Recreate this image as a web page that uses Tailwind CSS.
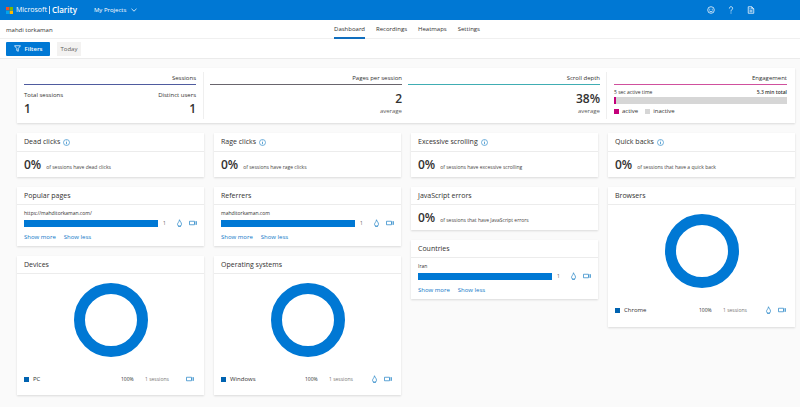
<!DOCTYPE html>
<html lang="en">
<head>
<meta charset="utf-8">
<meta name="viewport" content="width=device-width, initial-scale=1">
<title>Microsoft Clarity – Dashboard</title>
<script src="https://cdn.jsdelivr.net/npm/@tailwindcss/browser@4"></script>
</head>
<body class="min-h-screen bg-[#fafafa] font-['Open_Sans','Noto_Sans',sans-serif] text-[7px] leading-[10px] text-[#323130]">
<svg class="hidden" aria-hidden="true">
  <symbol id="info" viewBox="0 0 14 14"><circle cx="7" cy="7" r="6" fill="none" stroke="currentColor" stroke-width="1.3"/><path d="M7 6v4.5M7 3.3v1.4" stroke="currentColor" stroke-width="1.5"/></symbol>
  <symbol id="flame" viewBox="0 0 14 16"><path d="M7 1.500C7.500 4.500 11 6.500 11 10.500a4 4 0 0 1-8 0C3 8 6.500 6 7 1.500zM4 14.500h6" fill="none" stroke="currentColor" stroke-width="1.500"/></symbol>
  <symbol id="camera" viewBox="0 0 16 12"><path d="M1 2.500h10v7H1zM11 5l4-2v6l-4-2" fill="none" stroke="currentColor" stroke-width="1.500"/></symbol>
  <symbol id="donut" viewBox="0 0 74 74"><circle cx="37" cy="37" r="31.500" fill="none" stroke="#0078d4" stroke-width="11"/></symbol>
</svg>

<header class="flex h-5 items-center bg-[#0078d4] pl-[6px] pr-[45px] text-white">
  <a href="#" class="flex items-center">
    <svg class="size-[7px]" viewBox="0 0 7 7" aria-hidden="true"><path fill="#f25022" d="M0 0h3.300v3.300H0z"/><path fill="#7fba00" d="M3.700 0H7v3.300H3.700z"/><path fill="#00a4ef" d="M0 3.700h3.300V7H0z"/><path fill="#ffb900" d="M3.700 3.700H7V7H3.700z"/></svg>
    <span class="ml-[3px] text-[7px]">Microsoft</span>
    <span class="ml-[2px] h-2 w-px bg-white/80"></span>
    <span class="ml-[2px] text-[8px] font-semibold">Clarity</span>
  </a>
  <button type="button" class="ml-[17px] flex items-center gap-[5px] text-[6px] font-medium">My Projects
    <svg class="h-1 w-[6px]" viewBox="0 0 6 4" aria-hidden="true"><path d="M.5.8 3 3.200 5.500.8" fill="none" stroke="currentColor" stroke-width=".8"/></svg>
  </button>
  <div class="ml-auto flex items-center gap-[12px]">
    <button type="button" aria-label="Feedback"><svg class="size-2" viewBox="0 0 16 16"><circle cx="8" cy="8" r="6.600" fill="none" stroke="currentColor" stroke-width="1.500"/><path d="M5.500 5.500v2M10.500 5.500v2M4.500 9.500c1.500 2.500 5.500 2.500 7 0" fill="none" stroke="currentColor" stroke-width="1.500"/></svg></button>
    <button type="button" aria-label="Help"><svg class="size-2" viewBox="0 0 16 16"><path d="M4.800 5C4.800 0 11.500.5 11.200 4.800 11 7.500 8 7.500 8 11M8 13v2" fill="none" stroke="currentColor" stroke-width="1.600"/></svg></button>
    <button type="button" aria-label="Documentation"><svg class="size-2" viewBox="0 0 16 16"><path d="M2.500 1.500h7l4 4v9h-11zM9.500 1.500v4h4M5 8.500h6M5 11.500h6M5 5.500h2" fill="none" stroke="currentColor" stroke-width="1.500"/></svg></button>
  </div>
</header>

<div class="grid h-[19px] grid-cols-[1fr_auto_1fr] border-b border-[#f0f0f0] bg-white px-[6px] text-[6px]">
  <h1 class="self-center pt-px font-medium">mahdi torkaman</h1>
  <nav class="mr-[-7px] ml-[7px] flex gap-[11px] pt-[2px] leading-[15px]">
    <a href="#" aria-current="page" class="border-b-2 border-[#106ebe] font-medium">Dashboard</a>
    <a href="#">Recordings</a>
    <a href="#">Heatmaps</a>
    <a href="#">Settings</a>
  </nav>
</div>

<div class="flex h-5 items-center gap-[7px] border-b border-[#ebebeb] bg-white px-[6px] text-[6px]">
  <button type="button" class="flex h-[14px] w-11 items-center justify-center gap-1 rounded-[1px] bg-[#0078d4] font-semibold text-white">
    <svg class="size-[7px]" viewBox="0 0 14 14" aria-hidden="true"><path d="M1 1.500h12L8.500 7v5.500l-3-1.500V7z" fill="none" stroke="currentColor" stroke-width="1.500"/></svg>Filters</button>
  <button type="button" class="h-[14px] w-6 bg-[#f3f2f1] text-[6px] text-[#605e5c]">Today</button>
</div>

<main class="flex flex-col gap-[10px] pt-[9px] pr-[5px] pb-3 pl-[17px]">
  <section class="grid h-[55px] grid-cols-[187fr_201fr_202fr_188fr] bg-white py-1 shadow-[0_1px_2px_rgba(0,0,0,0.13)]" aria-label="Summary">
    <div class="border-r border-[#efefef] px-[7px]">
      <h2 class="h-[13px] border-b border-[#4f5b9f] text-right text-[6px] leading-[12px] font-medium">Sessions</h2>
      <div class="flex justify-between pt-[5px]">
        <div><p class="text-[6px] font-medium">Total sessions</p><p class="text-[12px] leading-[18px] font-semibold">1</p></div>
        <div class="text-right"><p class="text-[6px] font-medium">Distinct users</p><p class="text-[12px] leading-[18px] font-semibold">1</p></div>
      </div>
    </div>
    <div class="pr-[3px] pl-[6px] text-right">
      <h2 class="h-[13px] border-b border-[#69656d] text-[6px] leading-[12px] font-medium">Pages per session</h2>
      <p class="pt-[6px] text-[12px] leading-[16px] font-semibold">2</p>
      <p class="text-[6px] leading-[8px] text-[#605e5c]">average</p>
    </div>
    <div class="border-r border-[#efefef] pr-[6px] pl-[3px] text-right">
      <h2 class="h-[13px] border-b border-[#40adb3] text-[6px] leading-[12px] font-medium">Scroll depth</h2>
      <p class="pt-[6px] text-[12px] leading-[16px] font-semibold">38%</p>
      <p class="text-[6px] leading-[8px] text-[#605e5c]">average</p>
    </div>
    <div class="pr-2 pl-[7px]">
      <h2 class="h-[13px] border-b border-[#d0509d] text-right text-[6px] leading-[12px] font-medium">Engagement</h2>
      <div class="flex justify-between pt-[3px] text-[5px] leading-[9px]"><span>5 sec active time</span><span class="font-semibold">5.3 min total</span></div>
      <div class="flex h-[7px] gap-[2px] bg-[#d6d6d6]"><span class="w-[2px] bg-[#c4007a]"></span></div>
      <div class="flex items-center gap-[7px] pt-[2px] text-[6px] font-medium">
        <span class="flex items-center gap-[3px]"><i class="size-[5px] bg-[#c4007a]"></i>active</span>
        <span class="flex items-center gap-[3px]"><i class="size-[5px] bg-[#d6d6d6]"></i>inactive</span>
      </div>
    </div>
  </section>

  <div class="grid grid-cols-4 items-start gap-[10px]">
    <div class="flex flex-col gap-[10px]">
      <section class="bg-white shadow-[0_1px_2px_rgba(0,0,0,0.13)]">
        <h2 class="flex h-[19px] items-center gap-[3px] border-b border-[#ececec] px-[7px] font-medium">Dead clicks <svg class="size-[7px] text-[#2b88c8]" aria-hidden="true"><use href="#info"/></svg></h2>
        <p class="flex h-[25px] items-center gap-[5px] px-[7px]"><strong class="text-[12px] font-semibold">0%</strong><span class="pt-[5px] text-[5px] text-[#484644]">of sessions have dead clicks</span></p>
      </section>
      <section class="bg-white shadow-[0_1px_2px_rgba(0,0,0,0.13)]">
        <h2 class="flex h-[18px] items-center border-b border-[#ececec] px-[7px] font-medium">Popular pages</h2>
        <div class="px-[7px] pt-[3px] pb-1">
          <p class="text-[5px]">https://mahditorkaman.com/</p>
          <div class="flex items-center text-[#2b88c8]"><span class="h-[7px] flex-1 bg-[#0078d4]"></span><span class="w-[13px] text-center text-[5px] text-[#605e5c]">1</span><a href="#" aria-label="Heatmap" class="mr-[6px] ml-[5px]"><svg class="h-[8px] w-[7px]"><use href="#flame"/></svg></a><a href="#" aria-label="Recordings"><svg class="h-[6px] w-[8px]"><use href="#camera"/></svg></a></div>
          <div class="flex gap-2 pt-[4px] text-[6px] text-[#0f78c8]"><a href="#">Show more</a><a href="#">Show less</a></div>
        </div>
      </section>
      <section class="bg-white shadow-[0_1px_2px_rgba(0,0,0,0.13)]">
        <h2 class="flex h-[18px] items-center border-b border-[#ececec] px-[7px] font-medium">Devices</h2>
        <svg class="mx-auto mt-[9px] size-[74px]" role="img" aria-label="PC 100%"><use href="#donut"/></svg>
        <div class="mt-[17px] grid h-[21px] grid-cols-[1fr_24px_41px_11px] items-start px-[7px] text-[6px] text-[#2b88c8]">
          <span class="flex items-center gap-[4px] text-[#323130]"><i class="size-[5px] bg-[#0063b1]"></i>PC</span><span class="text-[5px] text-[#323130]">100%</span><span class="text-[5px] text-[#797775]">1 sessions</span><a href="#" aria-label="Recordings" class="flex h-[10px] items-center"><svg class="h-[6px] w-[8px]"><use href="#camera"/></svg></a>
        </div>
      </section>
    </div>

    <div class="flex flex-col gap-[10px]">
      <section class="bg-white shadow-[0_1px_2px_rgba(0,0,0,0.13)]">
        <h2 class="flex h-[19px] items-center gap-[3px] border-b border-[#ececec] px-[7px] font-medium">Rage clicks <svg class="size-[7px] text-[#2b88c8]" aria-hidden="true"><use href="#info"/></svg></h2>
        <p class="flex h-[25px] items-center gap-[5px] px-[7px]"><strong class="text-[12px] font-semibold">0%</strong><span class="pt-[5px] text-[5px] text-[#484644]">of sessions have rage clicks</span></p>
      </section>
      <section class="bg-white shadow-[0_1px_2px_rgba(0,0,0,0.13)]">
        <h2 class="flex h-[18px] items-center border-b border-[#ececec] px-[7px] font-medium">Referrers</h2>
        <div class="px-[7px] pt-[3px] pb-1">
          <p class="text-[5px]">mahditorkaman.com</p>
          <div class="flex items-center text-[#2b88c8]"><span class="h-[7px] flex-1 bg-[#0078d4]"></span><span class="w-[13px] text-center text-[5px] text-[#605e5c]">1</span><a href="#" aria-label="Heatmap" class="mr-[6px] ml-[5px]"><svg class="h-[8px] w-[7px]"><use href="#flame"/></svg></a><a href="#" aria-label="Recordings"><svg class="h-[6px] w-[8px]"><use href="#camera"/></svg></a></div>
          <div class="flex gap-2 pt-[4px] text-[6px] text-[#0f78c8]"><a href="#">Show more</a><a href="#">Show less</a></div>
        </div>
      </section>
      <section class="bg-white shadow-[0_1px_2px_rgba(0,0,0,0.13)]">
        <h2 class="flex h-[18px] items-center border-b border-[#ececec] px-[7px] font-medium">Operating systems</h2>
        <svg class="mx-auto mt-[9px] size-[74px]" role="img" aria-label="Windows 100%"><use href="#donut"/></svg>
        <div class="mt-[17px] grid h-[21px] grid-cols-[1fr_24px_42px_13px_10px] items-start px-[7px] text-[6px] text-[#2b88c8]">
          <span class="flex items-center gap-[4px] text-[#323130]"><i class="size-[5px] bg-[#0063b1]"></i>Windows</span><span class="text-[5px] text-[#323130]">100%</span><span class="text-[5px] text-[#797775]">1 sessions</span><a href="#" aria-label="Heatmap" class="flex h-[10px] items-center"><svg class="h-[8px] w-[7px]"><use href="#flame"/></svg></a><a href="#" aria-label="Recordings" class="flex h-[10px] items-center"><svg class="h-[6px] w-[8px]"><use href="#camera"/></svg></a>
        </div>
      </section>
    </div>

    <div class="flex flex-col gap-[10px]">
      <section class="bg-white shadow-[0_1px_2px_rgba(0,0,0,0.13)]">
        <h2 class="flex h-[19px] items-center gap-[3px] border-b border-[#ececec] px-[7px] font-medium">Excessive scrolling <svg class="size-[7px] text-[#2b88c8]" aria-hidden="true"><use href="#info"/></svg></h2>
        <p class="flex h-[25px] items-center gap-[5px] px-[7px]"><strong class="text-[12px] font-semibold">0%</strong><span class="pt-[5px] text-[5px] text-[#484644]">of sessions have excessive scrolling</span></p>
      </section>
      <section class="bg-white shadow-[0_1px_2px_rgba(0,0,0,0.13)]">
        <h2 class="flex h-[18px] items-center border-b border-[#ececec] px-[7px] font-medium">JavaScript errors</h2>
        <p class="flex h-[25px] items-center gap-[5px] px-[7px]"><strong class="text-[12px] font-semibold">0%</strong><span class="pt-[5px] text-[5px] text-[#484644]">of sessions that have JavaScript errors</span></p>
      </section>
      <section class="bg-white shadow-[0_1px_2px_rgba(0,0,0,0.13)]">
        <h2 class="flex h-[18px] items-center border-b border-[#ececec] px-[7px] font-medium">Countries</h2>
        <div class="px-[7px] pt-[3px] pb-1">
          <p class="text-[5px]">Iran</p>
          <div class="flex items-center text-[#2b88c8]"><span class="h-[7px] flex-1 bg-[#0078d4]"></span><span class="w-[13px] text-center text-[5px] text-[#605e5c]">1</span><a href="#" aria-label="Heatmap" class="mr-[6px] ml-[5px]"><svg class="h-[8px] w-[7px]"><use href="#flame"/></svg></a><a href="#" aria-label="Recordings"><svg class="h-[6px] w-[8px]"><use href="#camera"/></svg></a></div>
          <div class="flex gap-2 pt-[4px] text-[6px] text-[#0f78c8]"><a href="#">Show more</a><a href="#">Show less</a></div>
        </div>
      </section>
    </div>

    <div class="flex flex-col gap-[10px]">
      <section class="bg-white shadow-[0_1px_2px_rgba(0,0,0,0.13)]">
        <h2 class="flex h-[19px] items-center gap-[3px] border-b border-[#ececec] px-[7px] font-medium">Quick backs <svg class="size-[7px] text-[#2b88c8]" aria-hidden="true"><use href="#info"/></svg></h2>
        <p class="flex h-[25px] items-center gap-[5px] px-[7px]"><strong class="text-[12px] font-semibold">0%</strong><span class="pt-[5px] text-[5px] text-[#484644]">of sessions that have a quick back</span></p>
      </section>
      <section class="bg-white shadow-[0_1px_2px_rgba(0,0,0,0.13)]">
        <h2 class="flex h-[18px] items-center border-b border-[#ececec] px-[7px] font-medium">Browsers</h2>
        <svg class="mx-auto mt-[9px] size-[74px]" role="img" aria-label="Chrome 100%"><use href="#donut"/></svg>
        <div class="mt-[17px] grid h-[22px] grid-cols-[1fr_24px_42px_13px_10px] items-start px-[7px] text-[6px] text-[#2b88c8]">
          <span class="flex items-center gap-[4px] text-[#323130]"><i class="size-[5px] bg-[#0063b1]"></i>Chrome</span><span class="text-[5px] text-[#323130]">100%</span><span class="text-[5px] text-[#797775]">1 sessions</span><a href="#" aria-label="Heatmap" class="flex h-[10px] items-center"><svg class="h-[8px] w-[7px]"><use href="#flame"/></svg></a><a href="#" aria-label="Recordings" class="flex h-[10px] items-center"><svg class="h-[6px] w-[8px]"><use href="#camera"/></svg></a>
        </div>
      </section>
    </div>
  </div>
</main>
</body>
</html>
